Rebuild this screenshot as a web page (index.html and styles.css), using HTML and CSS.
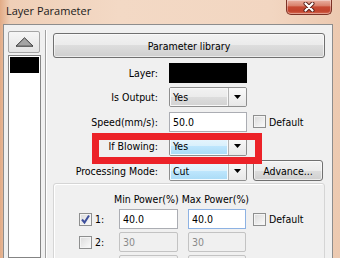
FILE: index.html
```html
<!DOCTYPE html>
<html lang="en">
<head>
  <meta charset="UTF-8" />
  <meta name="viewport" content="width=device-width, initial-scale=1.0"/>
  <title>Layer Parameter</title>
  <link rel="stylesheet" href="styles.css">
</head>
<body>
  <div class="titlebar">
    <span class="title">Layer Parameter</span>
    <div class="close-btn">
      <svg width="12" height="10" viewBox="0 0 12 10">
        <path d="M2.5 1.5 L9.5 8.5 M9.5 1.5 L2.5 8.5" stroke="#5a1f17" stroke-width="4" stroke-linecap="round"/>
        <path d="M2.5 1.5 L9.5 8.5 M9.5 1.5 L2.5 8.5" stroke="#fff" stroke-width="2.2" stroke-linecap="round"/>
      </svg>
    </div>
  </div>

  <div class="client">
    <div class="layer-col">
      <div class="up-btn">
        <svg width="19" height="10" viewBox="0 0 19 10">
          <path d="M9.5 0.8 L18 9.2 H1 Z" fill="#a4a4a4" stroke="#333" stroke-width="1"/>
        </svg>
      </div>
      <div class="layer-list">
        <div class="layer-item"></div>
      </div>
    </div>

    <div class="separator"></div>

    <div class="params">
      <div class="btn lib-btn">Parameter library</div>

      <div class="form">
        <label>Layer:</label>
        <div class="swatch"></div>
        <span></span>

        <label>Is Output:</label>
        <div class="combo">
          <span class="combo-text">Yes</span>
          <span class="combo-arrow"><svg width="7" height="4" viewBox="0 0 7 4"><path d="M0 0 H7 L3.5 4 Z" fill="#000"/></svg></span>
        </div>
        <span></span>

        <label>Speed(mm/s):</label>
        <div class="textbox">50.0</div>
        <div class="check-wrap"><span class="checkbox"></span>Default</div>

        <label>If Blowing:</label>
        <div class="combo">
          <span class="combo-text hot">Yes</span>
          <span class="combo-arrow"><svg width="7" height="4" viewBox="0 0 7 4"><path d="M0 0 H7 L3.5 4 Z" fill="#000"/></svg></span>
        </div>
        <span></span>

        <label>Processing Mode:</label>
        <div class="combo">
          <span class="combo-text hot">Cut</span>
          <span class="combo-arrow"><svg width="7" height="4" viewBox="0 0 7 4"><path d="M0 0 H7 L3.5 4 Z" fill="#000"/></svg></span>
        </div>
        <div class="btn adv-btn">Advance...</div>
      </div>

      <div class="power-group">
        <div class="power-head">
          <span>Min Power(%)</span>
          <span>Max Power(%)</span>
        </div>
        <div class="power-row">
          <span class="checkbox checked">
            <svg width="11" height="11" viewBox="0 0 11 11"><path d="M2 5.5 L4.5 8.5 L9 1.5" fill="none" stroke="#3d4f9c" stroke-width="2"/></svg>
          </span>
          <span class="row-no">1:</span>
          <div class="textbox min-box">40.0</div>
          <div class="textbox max-box focus">40.0</div>
          <span class="checkbox def-box"></span>Default
        </div>
        <div class="power-row">
          <span class="checkbox"></span>
          <span class="row-no">2:</span>
          <div class="textbox min-box off">30</div>
          <div class="textbox max-box off">30</div>
        </div>
        <div class="power-row">
          <span class="checkbox"></span>
          <span class="row-no"></span>
          <div class="textbox min-box off"></div>
          <div class="textbox max-box off"></div>
        </div>
      </div>
    </div>
  </div>

  <!-- red marker drawn over the "If Blowing" row -->
  <div class="highlight"></div>
</body>
</html>
```

FILE: styles.css
```css
body {
  margin: 0;
  width: 340px;
  height: 258px;
  overflow: hidden;
  position: relative;
  background: linear-gradient(90deg, #e2ab86 0, #efcfb7 3%, #f3d9c5 35%, #f2d6c1 80%, #ecc9b0 100%);
  font-family: "DejaVu Sans Condensed", "DejaVu Sans", sans-serif;
  font-size: 10.5px;
  color: #000;
}

.titlebar {
  height: 24px;
  display: flex;
  align-items: flex-start;
}

.title {
  font-family: "Open Sans", sans-serif;
  font-size: 11px;
  line-height: 22px;
  padding-left: 6px;
  color: #1a1a1a;
}

.close-btn {
  margin-left: auto;
  margin-right: 8px;
  width: 46px;
  height: 15px;
  box-sizing: border-box;
  border: 1px solid #7c3226;
  border-top: none;
  border-radius: 0 0 5px 5px;
  background: linear-gradient(#eab2a2 0, #d9826d 40%, #c74a33 50%, #c2432d 80%, #d87158 100%);
  box-shadow: inset 0 0 0 1px rgba(255,255,255,0.35);
  display: flex;
  align-items: center;
  justify-content: center;
}

.client {
  margin-left: 3px;
  width: 328px;
  height: 233px;
  border: 1px solid #8d8d8d;
  border-bottom: none;
  background: #f0f0f0;
  display: flex;
}

.layer-col {
  margin-left: 4px;
  width: 33px;
  padding-top: 6px;
  display: flex;
  flex-direction: column;
}

.up-btn {
  width: 32px;
  height: 22px;
  box-sizing: border-box;
  border: 1px solid #a5a5a5;
  border-radius: 2px;
  background: linear-gradient(#f6f6f6, #e4e4e4);
  display: flex;
  align-items: center;
  justify-content: center;
}

.layer-list {
  margin-top: 2px;
  flex: 1;
  border: 1px solid #848484;
  background: #fff;
  padding: 1px;
}

.layer-item {
  height: 16px;
  background: #000;
}

.separator {
  margin-left: 4px;
  margin-top: 5px;
  width: 0;
  border-left: 1px solid #a0a0a0;
  border-right: 1px solid #fff;
}

.params {
  margin-left: 6px;
  width: 272px;
  padding-top: 8px;
}

.btn {
  box-sizing: border-box;
  border: 1px solid #707070;
  border-radius: 3px;
  background: linear-gradient(#f2f2f2 0, #ebebeb 50%, #dddddd 50%, #cfcfcf 100%);
  box-shadow: inset 0 0 0 1px rgba(255,255,255,0.6);
  display: flex;
  align-items: center;
  justify-content: center;
}

.lib-btn {
  height: 25px;
}

.form {
  margin-top: 4px;
  display: grid;
  grid-template-columns: 116px 84px 1fr;
  grid-auto-rows: 21px;
  row-gap: 3.5px;
  align-items: center;
}

.form label {
  text-align: right;
  padding-right: 11px;
}

.swatch {
  width: 78px;
  height: 20px;
  background: #000;
}

.combo {
  width: 78px;
  height: 20px;
  box-sizing: border-box;
  border: 1px solid #8e8e8e;
  border-radius: 2px;
  display: flex;
  overflow: hidden;
}

.combo-text {
  flex: 1;
  padding-left: 3px;
  line-height: 18px;
  background: linear-gradient(#f2f2f2 0, #ebebeb 50%, #dddddd 50%, #d2d2d2 100%);
  box-shadow: inset 0 0 0 1px #f8f8f8;
}

.combo-text.hot {
  background: linear-gradient(#eaf6fd 0, #d9f0fc 50%, #bee6fd 50%, #a9dbf6 100%);
  box-shadow: inset 0 0 0 1px #f4fbff;
}

.combo-arrow {
  width: 17px;
  border-left: 1px solid #b4b4b4;
  background: linear-gradient(#fafafa, #e8e8e8);
  display: flex;
  align-items: center;
  justify-content: center;
}

.textbox {
  width: 78px;
  height: 20px;
  box-sizing: border-box;
  border: 1px solid #abadb3;
  background: #fff;
  padding-left: 3px;
  line-height: 18px;
}

.check-wrap {
  display: flex;
  align-items: center;
}

.checkbox {
  width: 13px;
  height: 13px;
  box-sizing: border-box;
  border: 1px solid #8e8f8f;
  background: linear-gradient(135deg, #dadada, #fbfbfb);
  box-shadow: inset 0 0 0 1px #f4f4f4;
  margin-right: 3px;
  display: flex;
  align-items: center;
  justify-content: center;
}

.adv-btn {
  width: 70px;
  height: 21px;
}

.power-group {
  margin-top: 2px;
  height: 90px;
  border: 1px solid #d5d5d5;
  border-radius: 3px;
  box-shadow: inset 1px 1px 0 #fff;
}

.power-head {
  margin-top: 8px;
  padding-left: 60px;
  line-height: 14px;
  display: flex;
  gap: 3px;
}

.power-row {
  margin-top: 3px;
  padding-left: 25px;
  height: 20px;
  display: flex;
  align-items: center;
}

.row-no {
  width: 24px;
}

.min-box {
  width: 59px;
}

.max-box {
  width: 58px;
  margin-left: 10px;
  margin-right: 7px;
}

.textbox.focus {
  border-color: #8db2e3;
}

.textbox.off {
  background: #f0f0f0;
  border-color: #c3c3c3;
  border-radius: 2px;
  color: #8a8a8a;
}

.highlight {
  position: absolute;
  left: 92px;
  top: 133px;
  width: 170px;
  height: 31px;
  box-sizing: border-box;
  border: 7px solid #ec2228;
}
```
